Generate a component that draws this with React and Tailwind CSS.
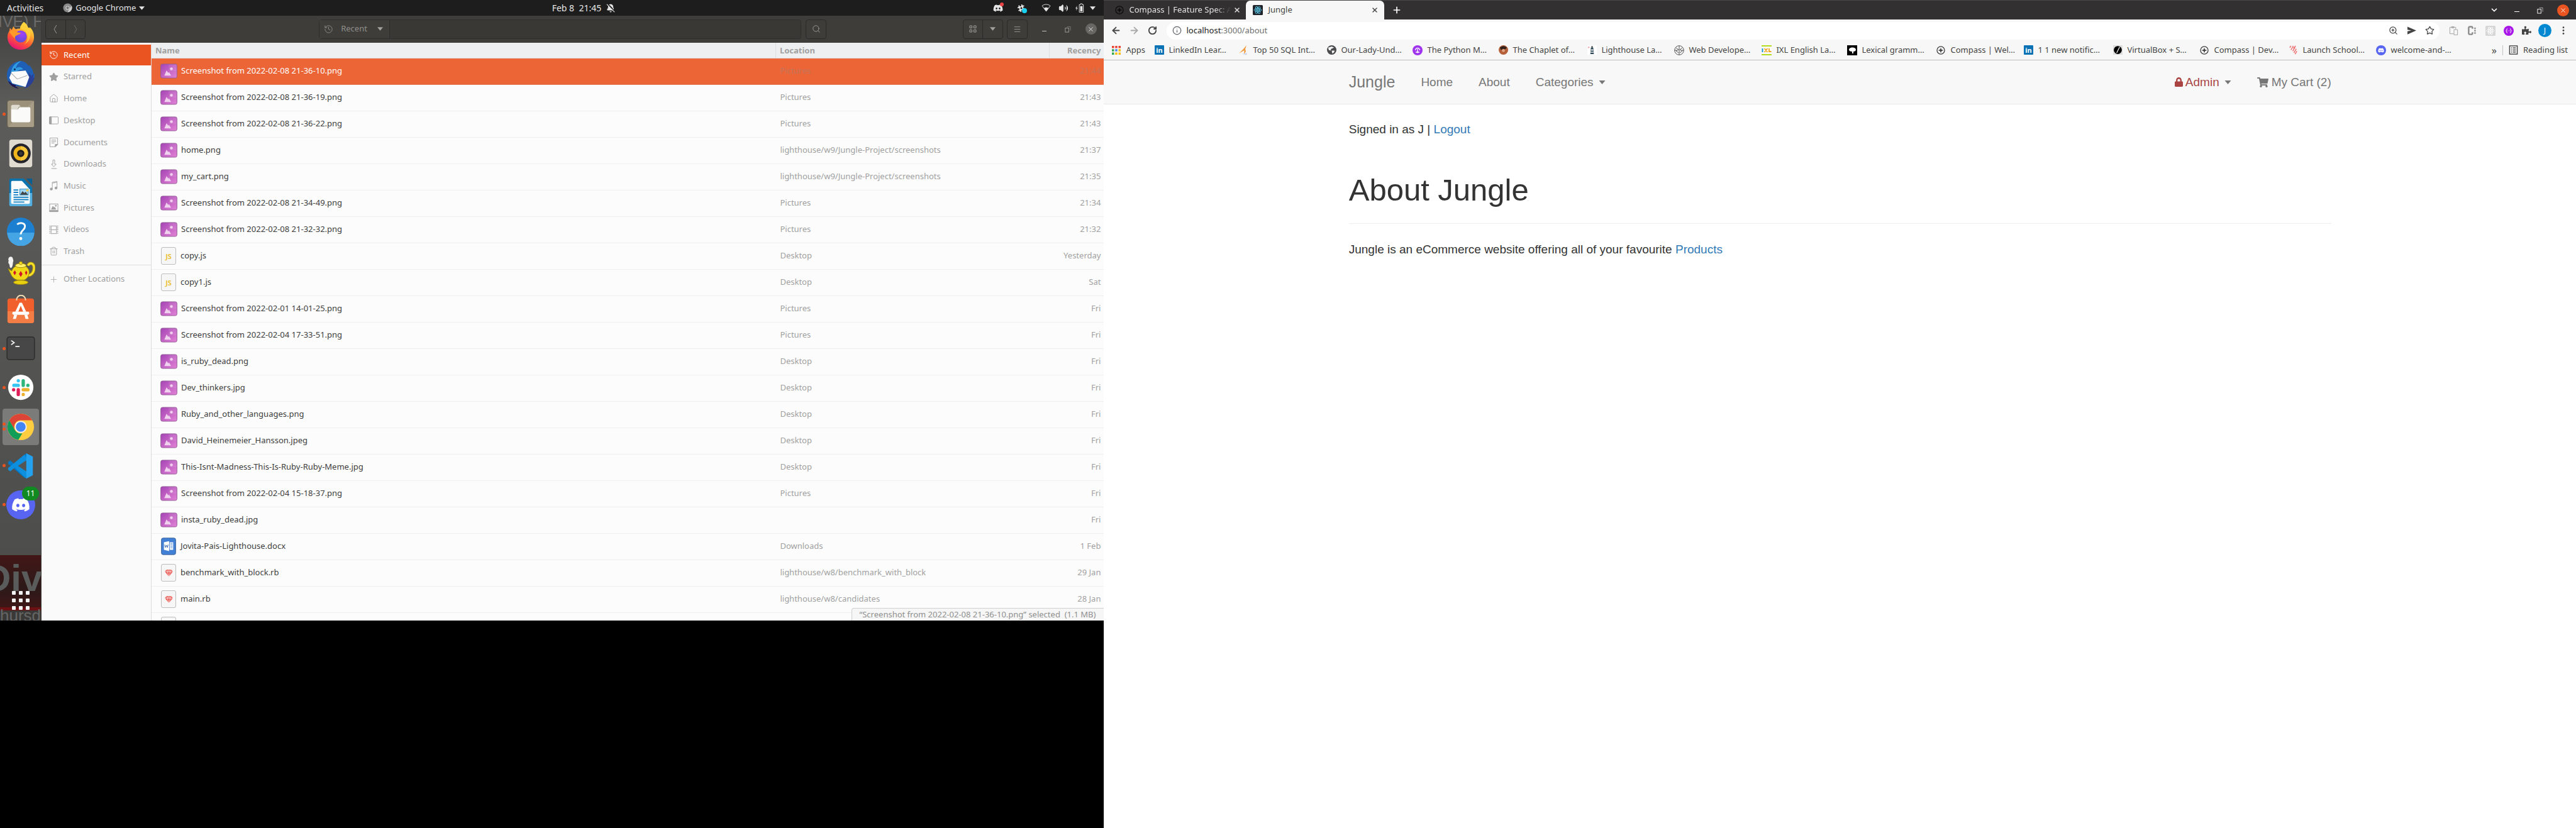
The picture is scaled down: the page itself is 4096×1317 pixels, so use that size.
import React from 'react';
import { FaLock, FaShoppingCart, FaDiscord, FaSlackHash, FaPuzzlePiece } from 'react-icons/fa';
import {
  ArrowLeft, ArrowRight, RotateCw, Info, X, Plus, Star, ZoomIn, Search, Menu, History, Trash2,
  Home, ChevronDown, Volume2, BellOff,
} from 'lucide-react';

/* ---------- shared small pieces ---------- */

function Caret({ className = 'w-[9px]' }) {
  return (
    <svg viewBox="0 0 10 6" className={'h-[6px] fill-current ' + className} aria-hidden="true">
      <path d="M0 0h10L5 6z" />
    </svg>
  );
}

function RestoreGlyph() {
  return (
    <svg viewBox="0 0 12 12" className="size-[11px]" fill="none" stroke="currentColor" aria-hidden="true">
      <rect x="2" y="4" width="6" height="7" />
      <path d="M5 1.5h6v7" opacity="0.6" />
    </svg>
  );
}

function AtomGlyph({ className, color, bg }) {
  return (
    <svg viewBox="0 0 16 16" className={className} aria-hidden="true">
      <rect width="16" height="16" rx="1.5" fill={bg} />
      <g fill="none" stroke={color} strokeWidth="0.9">
        <ellipse cx="8" cy="8" rx="6" ry="2.4" />
        <ellipse cx="8" cy="8" rx="6" ry="2.4" transform="rotate(60 8 8)" />
        <ellipse cx="8" cy="8" rx="6" ry="2.4" transform="rotate(120 8 8)" />
      </g>
      <circle cx="8" cy="8" r="1.3" fill={color} />
    </svg>
  );
}

/* ---------- dock ---------- */

function Firefox() {
  return (
    <svg viewBox="0 0 48 48" className="size-[46px]" aria-hidden="true">
      <defs>
        <linearGradient id="ff1" x1="0.8" y1="0" x2="0.3" y2="1">
          <stop offset="0" stopColor="#fff24a" />
          <stop offset="0.35" stopColor="#ffb030" />
          <stop offset="0.65" stopColor="#ff5a30" />
          <stop offset="1" stopColor="#e4107c" />
        </linearGradient>
        <radialGradient id="ff2" cx="0.6" cy="0.3" r="0.7">
          <stop offset="0" stopColor="#a340f5" />
          <stop offset="1" stopColor="#5a4fd8" />
        </radialGradient>
      </defs>
      <path fill="url(#ff1)" d="M29 1c3 2 6 5 7 9 1 0 1 1 2 1l1-1c5 4 7 10 7 16 0 12-10 21-22 21S2 38 2 26c0-4 1-7 3-10l1-5 3 3 3-6c1 2 2 4 4 5 2-1 5-1 7-1C23 8 26 4 29 1z" />
      <circle cx="24" cy="25" r="10" fill="url(#ff2)" />
      <path fill="#ff9a2a" d="M5 17c3-2 7-3 10-1 3 3 6 3 9 3-1 3-6 3-8 5-2 1-2 3-1 5-3-2-6-6-10-12z" />
      <path fill="#ffd23c" d="M29 1c3 2 6 5 7 9 4 4 5 10 3 17-1 5-5 9-9 11 6-5 7-14 2-21-2-3-7-4-9-5C23 8 26 4 29 1z" opacity="0.75" />
    </svg>
  );
}

function Thunderbird() {
  return (
    <svg viewBox="0 0 48 48" className="size-[46px]" aria-hidden="true">
      <path fill="#1f5fb5" d="M24 1C11 2 1 12 1 25c0 7 3 13 7 17l4-2 4 4 2-2c9 4 18 1 24-5 4-5 5-10 5-15l-2 1c0-6-3-11-7-15l-1 1C33 4 29 1 24 1z" />
      <path fill="#2f9be0" d="M8 22C8 11 15 3 25 1c-4 3-8 6-9 12 5-3 10-2 12 2-5 0-9 1-12 5l-5 5z" />
      <path fill="#2a3f96" d="M37 20c1 9 0 19-8 27 9-2 16-9 18-19l-3 2 2-8-4 4z" />
      <path fill="#fafafa" d="M9 19l23-2 6 11-6 16-22-6-5-9z" />
      <path fill="none" stroke="#aaa" strokeWidth="1.2" d="M8 21l10 10 17-6" />
      <path fill="#201650" d="M3 34l8 6 5 1-1 2 6 4C13 46 6 42 3 34z" />
      <circle cx="14" cy="15" r="1.6" fill="#133064" />
    </svg>
  );
}

function FilesApp() {
  return (
    <svg viewBox="0 0 48 48" className="size-[46px]" aria-hidden="true">
      <rect x="1.5" y="1.5" width="45" height="45" rx="4" fill="#9c927c" stroke="#5f594a" />
      <path d="M46 2L3 46h40a3 3 0 003-3z" fill="#a89e88" />
      <path d="M8 12a3 3 0 013-3h10l3 3h-3l-3 6H8z" fill="#dedad0" />
      <path d="M8 17h11l3-4h16a2 2 0 012 2v20a3 3 0 01-3 3H11a3 3 0 01-3-3z" fill="#fafaf8" />
    </svg>
  );
}

function Rhythmbox() {
  return (
    <svg viewBox="0 0 48 48" className="size-[46px]" aria-hidden="true">
      <rect x="5" y="1" width="38" height="46" rx="4" fill="#dfdbd0" />
      <circle cx="24" cy="24" r="16.5" fill="#23242c" />
      <circle cx="24" cy="24" r="12" fill="#f0b51c" />
      <path d="M24 12a12 12 0 010 24z" fill="#f7c83c" />
      <circle cx="24" cy="24" r="6" fill="#1b1b1b" />
      <circle cx="24" cy="24" r="3" fill="#3a3a3a" />
    </svg>
  );
}

function Writer() {
  return (
    <svg viewBox="0 0 48 48" className="size-[46px]" aria-hidden="true">
      <path d="M8 1h21l14 15v28a3 3 0 01-3 3H8a3 3 0 01-3-3V4a3 3 0 013-3z" fill="#0b73ae" />
      <path d="M5 25h38v19a3 3 0 01-3 3H8a3 3 0 01-3-3z" fill="#55afdf" />
      <path d="M33 1h10v11z" fill="#0a5f92" />
      <path d="M10 5h16l13 14v22a2 2 0 01-2 2H10a2 2 0 01-2-2V7a2 2 0 012-2z" fill="#fdfdfd" />
      <g fill="#1583c4">
        <path d="M12 19h8v2h-8zM12 23h8v2h-8zM12 27h8v2h-8zM12 31h25v2H12zM12 35h25v2H12zM12 39h18v2H12z" />
        <path d="M22 18h15v11H22z" />
      </g>
      <path d="M23 19h13v9H23z" fill="#9fd6f2" />
      <path d="M23 28l4-6 3 3 2-2 4 5z" fill="#444" />
      <circle cx="35" cy="20.5" r="2" fill="#f6c944" />
    </svg>
  );
}

function HelpApp() {
  return (
    <svg viewBox="0 0 48 48" className="size-[46px]" aria-hidden="true">
      <circle cx="24" cy="24" r="23" fill="#1d7fd0" />
      <path d="M1.5 26a22.5 22.5 0 0045 0z" fill="#45a5e4" />
      <path d="M18 12.500c3-3 13-4 13 3.500 0 6-7 6-7 13" fill="none" stroke="#fff" strokeWidth="3" />
      <circle cx="24" cy="36" r="2.5" fill="#fff" />
    </svg>
  );
}

function Teapot() {
  return (
    <svg viewBox="0 0 48 48" className="size-[46px]" aria-hidden="true">
      <path fill="#f2f2f2" d="M5 2c3-2 6 0 6 3 1 2 1 4 0 6 0 4-1 8-3 9-3 0-2-4-3-6-2-2-2-4-1-6-1-2-1-4 1-6z" />
      <path fill="none" stroke="#b99a08" strokeWidth="5" d="M36 16c3-6 10-4 10 4s-5 13-11 12" />
      <path fill="none" stroke="#f6e22c" strokeWidth="3" d="M36 16c3-6 10-4 10 4s-5 13-11 12" />
      <path fill="#eed818" stroke="#a38a08" d="M3 21l6 4c2-6 8-10 15-10s14 5 14 12c0 6-4 11-8 13H18c-6-2-9-6-11-11z" />
      <ellipse cx="24" cy="16" rx="9" ry="3.5" fill="#fff06a" stroke="#a38a08" />
      <circle cx="24" cy="12" r="2.6" fill="#f3de20" stroke="#a38a08" />
      <ellipse cx="24" cy="44" rx="12" ry="3.5" fill="#e7cf12" stroke="#a38a08" />
      <path fill="#d3122a" d="M14 24l2.500 4-2.500 4-2.500-4zM24 25l3 5-3 5-3-5zM33 24l2 4-2 4-2-4z" />
    </svg>
  );
}

function SoftwareApp() {
  return (
    <svg viewBox="0 0 48 48" className="size-[46px]" aria-hidden="true">
      <rect x="2" y="6" width="44" height="41" rx="4" fill="#f1602c" />
      <path d="M2 27h44v16a4 4 0 01-4 4H6a4 4 0 01-4-4z" fill="#f47c45" />
      <path d="M17 9c0-11 15-11 15 0" fill="none" stroke="#f3dcb5" strokeWidth="2" />
      <path d="M15 28l7-15h4l7 15h-5l-4-10-4 10z" fill="#fff" />
      <rect x="10" y="28" width="28" height="5" rx="2.5" fill="#fff" />
      <path d="M13 33h5l-2 7h-5zM30 33h5l2 7h-5z" fill="#fff" />
    </svg>
  );
}

function TerminalApp() {
  return (
    <svg viewBox="0 0 48 40" className="w-[46px] h-[38px]" aria-hidden="true">
      <rect x="1" y="1" width="46" height="38" rx="4" fill="#474747" stroke="#2c2c2c" strokeWidth="1.5" />
      <path d="M8 7l5 3.500L8 14M15 17h7" fill="none" stroke="#f3f3f3" strokeWidth="1.8" />
    </svg>
  );
}

function SlackApp() {
  return (
    <svg viewBox="0 0 48 48" className="size-[42px]" aria-hidden="true">
      <circle cx="24" cy="24" r="23" fill="#fff" />
      <g strokeWidth="6" strokeLinecap="round">
        <path d="M19.500 12v.1M11.500 20.500h8" stroke="#36c5f0" />
        <path d="M28.500 12v8.500M37 20.500h-.1" stroke="#2eb67d" />
        <path d="M28.500 37v-.1M28.500 28.500H37" stroke="#ecb22e" />
        <path d="M11 28.500h.1M19.500 28.500V37" stroke="#e01e5a" />
      </g>
    </svg>
  );
}

function ChromeApp() {
  return (
    <svg viewBox="0 0 48 48" className="size-[44px]" aria-hidden="true">
      <circle cx="24" cy="24" r="23" fill="#ffcd40" />
      <path d="M24 1a23 23 0 0119.900 11.500H24a11.500 11.500 0 00-10 17.200L4.100 12.500A23 23 0 0124 1z" fill="#db4437" />
      <path d="M4.100 12.500L14 29.700A11.500 11.500 0 0024 35.500l3-.4-7 11.500A23 23 0 014.100 12.500z" fill="#0f9d58" />
      <path d="M34 29.700L24 47l-4-.4L27 35z" fill="#ffcd40" />
      <circle cx="24" cy="24" r="10.500" fill="#f1f1f1" />
      <circle cx="24" cy="24" r="8.500" fill="#4285f4" />
    </svg>
  );
}

function CodeApp() {
  return (
    <svg viewBox="0 0 48 48" className="size-[42px]" aria-hidden="true">
      <path d="M34 1L13 21 5 14l-4 3v3l30 26 4-10V14z" fill="#0078c8" />
      <path d="M34 47L13 27l-8 7-4-3v-3L31 3l4 9z" fill="#0d8fdd" />
      <path d="M34 1l12 6v34l-12 6z" fill="#24a2f0" />
      <path d="M34 14L19 24l15 10z" fill="#555553" />
    </svg>
  );
}

function DiscordApp() {
  return (
    <span className="relative grid size-[46px] place-items-center rounded-full bg-[#5865f2] text-white">
      <FaDiscord className="size-[30px]" aria-hidden="true" />
      <span className="absolute -top-[6px] -right-[6px] grid h-[22px] w-[27px] place-items-center rounded-full bg-[#118a22] text-[12px] leading-none">11</span>
    </span>
  );
}

const DOCK = [
  { name: 'Firefox', Icon: Firefox, dots: 0 },
  { name: 'Thunderbird', Icon: Thunderbird, dots: 0 },
  { name: 'Files', Icon: FilesApp, dots: 1 },
  { name: 'Rhythmbox', Icon: Rhythmbox, dots: 0 },
  { name: 'Writer', Icon: Writer, dots: 0 },
  { name: 'Help', Icon: HelpApp, dots: 0 },
  { name: 'Teapot', Icon: Teapot, dots: 0 },
  { name: 'Software', Icon: SoftwareApp, dots: 0 },
  { name: 'Terminal', Icon: TerminalApp, dots: 1 },
  { name: 'Slack', Icon: SlackApp, dots: 1 },
  { name: 'Chrome', Icon: ChromeApp, dots: 2, active: true },
  { name: 'Code', Icon: CodeApp, dots: 1 },
  { name: 'Discord', Icon: DiscordApp, dots: 1 },
];

function Dock() {
  return (
    <nav aria-label="Dock" className="relative flex w-[66px] shrink-0 flex-col overflow-hidden border-r border-[#3c3b39] bg-linear-to-b from-[#414140] via-[#5c5c5a] via-15% to-[#4b4b4a]">
      {/* Wallpaper behind the dock */}
      <div aria-hidden="true" className="absolute inset-x-0 top-0 h-5 overflow-hidden font-['Liberation_Sans'] text-[25px] leading-none whitespace-nowrap text-[#6b6b6a]">
        <span className="absolute bottom-[-2px] left-[-3px]">IVE) H</span>
      </div>
      <div aria-hidden="true" className="absolute inset-x-0 bottom-0 h-[104px] overflow-hidden bg-linear-to-b from-[#431616] via-[#2c1919] to-[#4a1214] font-['Liberation_Sans'] font-bold whitespace-nowrap">
        <span className="absolute top-[5px] left-[-26px] text-[60px] leading-[64px] text-[#5a5c5b]">Div</span>
        <div className="absolute inset-x-0 bottom-0 h-[21px] border-t-[5px] border-[#6c1013] bg-[#3a3938]" />
        <span className="absolute bottom-[-5px] left-0 text-[26px] leading-none font-normal text-[#666]">hursday</span>
      </div>
      <ul className="relative flex h-[809px] flex-col pt-[1px]">
        {DOCK.map(({ name, Icon, dots, active }) => (
          <li key={name} className="flex min-h-0 flex-1 items-center pl-[4px]">
            <button
              type="button"
              aria-label={name}
              className={
                active
                  ? 'relative grid size-[58px] place-items-center rounded-[4px] bg-[#7b7b79]'
                  : 'relative grid size-[58px] place-items-center rounded-[4px]'
              }
            >
              <Icon />
              <span className="absolute left-0 flex flex-col gap-[3px]">
                {Array.from({ length: dots }, (_, i) => (
                  <span key={i} className="size-[5px] rounded-full bg-[#e95420]" />
                ))}
              </span>
            </button>
          </li>
        ))}
      </ul>
      <button type="button" aria-label="Show applications" className="relative mx-auto mt-auto mb-[17px] grid grid-cols-3 gap-x-[5px] gap-y-[6px]">
        {Array.from({ length: 9 }, (_, i) => (
          <span key={i} className="size-[6px] rounded-[1px] bg-[#f2f2f2]" />
        ))}
      </button>
    </nav>
  );
}

/* ---------- file manager ---------- */

const StarGlyph = ({ className }) => <Star className={className} fill="currentColor" />;
const DesktopGlyph = ({ className }) => (
  <svg viewBox="0 0 16 16" className={className} fill="none" stroke="currentColor" aria-hidden="true">
    <rect x="0.5" y="2" width="15" height="12" rx="1" />
    <path d="M1 2h3v12H1z" fill="currentColor" />
  </svg>
);
const DocumentGlyph = ({ className }) => (
  <svg viewBox="0 0 16 16" className={className} fill="none" stroke="currentColor" aria-hidden="true">
    <path d="M1.500 .5h13v11l-4 4h-9zM4 4h8M4 6.500h8M4 9h5" />
    <path d="M10.500 15.500v-4h4z" fill="currentColor" />
  </svg>
);
const DownloadGlyph = ({ className }) => (
  <svg viewBox="0 0 16 16" className={className} fill="none" stroke="currentColor" aria-hidden="true">
    <path d="M6.500 .5h3v7h2.500L8 12 4 7.500h2.500zM4 15h9" />
  </svg>
);
const MusicGlyph = ({ className }) => (
  <svg viewBox="0 0 16 16" className={className} fill="none" stroke="currentColor" aria-hidden="true">
    <path d="M5.500 13V2l8-1.500V11M5.500 3.500l8-1.500" />
    <circle cx="3.800" cy="13.500" r="1.900" fill="currentColor" />
    <circle cx="11.800" cy="11.800" r="1.900" fill="currentColor" />
  </svg>
);
const PictureGlyph = ({ className }) => (
  <svg viewBox="0 0 16 16" className={className} fill="none" stroke="currentColor" aria-hidden="true">
    <rect x="1" y="1.500" width="14" height="13" />
    <path d="M1 12.500h14v2H1zM4 10.500l2.500-5 2 2.500 1-1 2 3.500z" fill="currentColor" />
    <circle cx="11.500" cy="4.500" r="1" fill="currentColor" />
  </svg>
);
const FilmGlyph = ({ className }) => (
  <svg viewBox="0 0 16 16" className={className} fill="none" stroke="currentColor" aria-hidden="true">
    <path d="M3.500 1v14M12.500 1v14M3.500 1.500h9M3.500 8h9M3.500 14.500h9" />
    <path d="M1.500 1v14M14.500 1v14" strokeWidth="2" strokeDasharray="1.500 1.500" />
  </svg>
);

const PLACES = [
  ['Recent', History],
  ['Starred', StarGlyph],
  ['Home', Home],
  ['Desktop', DesktopGlyph],
  ['Documents', DocumentGlyph],
  ['Downloads', DownloadGlyph],
  ['Music', MusicGlyph],
  ['Pictures', PictureGlyph],
  ['Videos', FilmGlyph],
  ['Trash', Trash2],
];

const FILES = [
  ['img', 'Screenshot from 2022-02-08 21-36-10.png', 'Pictures', '21:44'],
  ['img', 'Screenshot from 2022-02-08 21-36-19.png', 'Pictures', '21:43'],
  ['img', 'Screenshot from 2022-02-08 21-36-22.png', 'Pictures', '21:43'],
  ['img', 'home.png', 'lighthouse/w9/Jungle-Project/screenshots', '21:37'],
  ['img', 'my_cart.png', 'lighthouse/w9/Jungle-Project/screenshots', '21:35'],
  ['img', 'Screenshot from 2022-02-08 21-34-49.png', 'Pictures', '21:34'],
  ['img', 'Screenshot from 2022-02-08 21-32-32.png', 'Pictures', '21:32'],
  ['js', 'copy.js', 'Desktop', 'Yesterday'],
  ['js', 'copy1.js', 'Desktop', 'Sat'],
  ['img', 'Screenshot from 2022-02-01 14-01-25.png', 'Pictures', 'Fri'],
  ['img', 'Screenshot from 2022-02-04 17-33-51.png', 'Pictures', 'Fri'],
  ['img', 'is_ruby_dead.png', 'Desktop', 'Fri'],
  ['img', 'Dev_thinkers.jpg', 'Desktop', 'Fri'],
  ['img', 'Ruby_and_other_languages.png', 'Desktop', 'Fri'],
  ['img', 'David_Heinemeier_Hansson.jpeg', 'Desktop', 'Fri'],
  ['img', 'This-Isnt-Madness-This-Is-Ruby-Ruby-Meme.jpg', 'Desktop', 'Fri'],
  ['img', 'Screenshot from 2022-02-04 15-18-37.png', 'Pictures', 'Fri'],
  ['img', 'insta_ruby_dead.jpg', '', 'Fri'],
  ['doc', 'Jovita-Pais-Lighthouse.docx', 'Downloads', '1 Feb'],
  ['rb', 'benchmark_with_block.rb', 'lighthouse/w8/benchmark_with_block', '29 Jan'],
  ['rb', 'main.rb', 'lighthouse/w8/candidates', '28 Jan'],
  ['rb', '', '', ''],
];

function FileIcon({ kind }) {
  if (kind === 'img') {
    return (
      <svg viewBox="0 0 30 26" className="w-[27px] h-[24px] shrink-0" aria-hidden="true">
        <defs>
          <linearGradient id="pic" x1="0" y1="0" x2="1" y2="1">
            <stop offset="0" stopColor="#a544b4" />
            <stop offset="1" stopColor="#e283d6" />
          </linearGradient>
        </defs>
        <rect x="0.7" y="0.7" width="28.6" height="24.6" rx="3" fill="url(#pic)" stroke="#8e5b93" />
        <path d="M15 1h11a3 3 0 013 3v9H15z" fill="#fff" opacity="0.08" />
        <path d="M7 21l4-9 3 4.500 1-2 4 6.500z" fill="#f0d2ee" />
        <circle cx="19.500" cy="9" r="2.500" fill="#f0d2ee" />
      </svg>
    );
  }
  if (kind === 'doc') {
    return (
      <svg viewBox="0 0 26 30" className="w-[24px] h-[28px] mx-[1px] shrink-0" aria-hidden="true">
        <rect x="0.7" y="0.7" width="24.6" height="28.6" rx="3" fill="#4280d6" stroke="#3a6296" />
        <path d="M5 8l9-2v17l-9-2z" fill="#fff" />
        <path d="M15 8h6v13h-6z" fill="#fff" />
        <path d="M16 10h4M16 12.500h4M16 15h4M16 17.500h4" stroke="#4280d6" strokeWidth="0.9" />
        <path d="M6.500 12l1.200 5 1.800-4 1.600 4 1.200-5" fill="none" stroke="#2f62ae" />
      </svg>
    );
  }
  return (
    <span className="mx-[1px] grid h-[28px] w-[24px] shrink-0 place-items-center rounded-[3px] border border-[#bdbdbd] bg-[#f6f6f6]">
      {kind === 'js' ? (
        <span className="text-[11px] leading-none font-bold text-[#ecc23c]">JS</span>
      ) : (
        <svg viewBox="0 0 14 12" className="w-[13px] h-[11px]" aria-hidden="true">
          <path d="M3 0h8l3 3.500L7 12 0 3.500z" fill="#ee5f59" />
          <path d="M0 3.800h14M4.500 4l2.500 8 2.500-8M3 0l2 3.800L7 .5l2 3.300L11 0" fill="none" stroke="#f6f6f6" strokeWidth="0.7" />
        </svg>
      )}
    </span>
  );
}

const headBtn = 'grid h-[31px] place-items-center text-[#a3a29e]';

function FileManager() {
  return (
    <section aria-label="Files" className="relative flex min-w-0 flex-1 flex-col overflow-hidden bg-[#fafafa]">
      <header className="grid h-[43px] shrink-0 grid-cols-[1fr_auto_1fr] items-center bg-[#3e3d3a] pb-[1px] text-[#8f8e8a]">
        <div className="ml-[6px] flex w-[64px] divide-x divide-[#2a2a28] rounded-[4px] border border-[#2a2a28]">
          <button type="button" aria-label="Back" className="grid h-[29px] flex-1 place-items-center">
            <svg viewBox="0 0 8 16" className="h-[15px] w-[8px]" fill="none" stroke="#a3a29e"><path d="M6 1L2 8l4 7" /></svg>
          </button>
          <button type="button" aria-label="Forward" className="grid h-[29px] flex-1 place-items-center">
            <svg viewBox="0 0 8 16" className="h-[15px] w-[8px]" fill="none" stroke="#6d6c69"><path d="M2 1l4 7-4 7" /></svg>
          </button>
        </div>
        <div className="flex w-[807px] gap-[7px]">
          <div className="flex h-[31px] flex-1 rounded-[4px] border border-[#302f2d] bg-[#393835]">
            <button type="button" className="flex w-[112px] items-center gap-3 border-r border-[#302f2d] bg-[#3e3d3a] pl-[7px] text-[13px]">
              <History className="size-[15px]" strokeWidth={1.5} aria-hidden="true" />
              Recent
              <Caret className="ml-[4px] w-[9px] text-[#a3a29e]" />
            </button>
          </div>
          <button type="button" aria-label="Search" className={headBtn + ' w-[33px] rounded-[4px] border border-[#2a2a28]'}>
            <Search className="size-[14px]" strokeWidth={1.5} />
          </button>
        </div>
        <div className="flex items-center justify-end pr-[2px]">
          <div className="mr-[6px] flex divide-x divide-[#2a2a28] rounded-[4px] border border-[#2a2a28]">
            <button type="button" aria-label="Grid view" className="grid h-[29px] w-[31px] place-items-center text-[#a3a29e]">
              <svg viewBox="0 0 12 12" className="size-[12px]" fill="none" stroke="currentColor">
                <path d="M1 1h3.500v3.500H1zM7.500 1H11v3.500H7.500zM1 7.500h3.500V11H1zM7.500 7.500H11V11H7.500z" />
              </svg>
            </button>
            <button type="button" aria-label="View options" className="grid h-[29px] w-[31px] place-items-center text-[#a3a29e]">
              <Caret />
            </button>
          </div>
          <button type="button" aria-label="Menu" className={headBtn + ' mr-[8px] w-[33px] rounded-[4px] border border-[#2a2a28]'}>
            <Menu className="size-[13px]" strokeWidth={1.5} />
          </button>
          <button type="button" aria-label="Minimize" className={headBtn + ' w-[37px]'}>
            <span className="mt-[6px] h-[1px] w-[7px] bg-[#c2c1bd]" />
          </button>
          <button type="button" aria-label="Restore" className={headBtn + ' w-[37px]'}>
            <RestoreGlyph />
          </button>
          <button type="button" aria-label="Close" className={headBtn + ' w-[37px]'}>
            <span className="grid size-[18px] place-items-center rounded-full bg-[#686764] text-[#f0f0f0]">
              <X className="size-[11px]" />
            </span>
          </button>
        </div>
      </header>

      <div className="flex min-h-0 flex-1">
        <aside className="flex w-[175px] shrink-0 flex-col border-r border-[#dcdcdc] text-[13px] text-[#a0a0a0]">
          <ul className="flex h-[350px] flex-col pt-[3px]">
            {PLACES.map(([label, Icon], i) => (
              <li key={label} className="flex flex-1 flex-col">
                <button
                  type="button"
                  className={
                    i === 0
                      ? 'flex h-[33px] w-full items-center gap-2 bg-[#e95420] pl-3 text-white'
                      : 'flex h-[33px] w-full items-center gap-2 pl-3'
                  }
                >
                  <Icon className="size-[15px]" strokeWidth={1.5} />
                  {label}
                </button>
              </li>
            ))}
          </ul>
          <div className="mt-[3px] border-t border-[#dcdcdc] pt-[5px]">
            <button type="button" className="flex h-[34px] w-full items-center gap-2 pl-3">
              <Plus className="size-[15px]" strokeWidth={1.2} />
              Other Locations
            </button>
          </div>
        </aside>

        <div className="min-w-0 flex-1 overflow-hidden bg-[#fcfcfc]">
          <table className="w-full table-fixed text-left text-[13px]">
            <colgroup>
              <col />
              <col className="w-[435px]" />
              <col className="w-[87px]" />
            </colgroup>
            <thead>
              <tr className="h-[24px] border-b border-[#dfe0e1] bg-[#eeeff0] text-[#a0a0a0]">
                <th className="pl-[6px] leading-[20px] font-bold">Name</th>
                <th className="border-l border-[#dddedf] pl-[6px] leading-[20px] font-bold">Location</th>
                <th className="border-l border-[#dddedf] pr-[5px] text-right leading-[20px] font-bold">Recency</th>
              </tr>
            </thead>
            <tbody>
              {FILES.map(([kind, name, where, when], i) => (
                <tr
                  key={i}
                  className={
                    i === 0
                      ? 'h-[42px] border-b border-[#e27a56] bg-[#eb6536] text-white'
                      : 'h-[42px] border-b border-[#efefef] text-[#3d3d3d]'
                  }
                >
                  <td className="pl-[14px]">
                    <span className="flex items-center gap-[6px]">
                      <FileIcon kind={kind} />
                      {name}
                    </span>
                  </td>
                  <td className={i === 0 ? 'pl-[7px] text-[#c4745a]' : 'pl-[7px] text-[#a0a0a0]'}>{where}</td>
                  <td className={i === 0 ? 'pr-[5px] text-right text-[#c4745a]' : 'pr-[5px] text-right text-[#a0a0a0]'}>{when}</td>
                </tr>
              ))}
            </tbody>
          </table>
        </div>
      </div>

      <p className="absolute right-0 bottom-0 flex h-[20px] items-center rounded-tl-[4px] border-t border-l border-[#d0d0d0] bg-[#f6f6f6] pr-[13px] pl-[12px] text-[13px] whitespace-pre text-[#8f8f8f]">
        “Screenshot from 2022-02-08 21-36-10.png” selected  (1.1 MB)
      </p>
    </section>
  );
}

function TopBar() {
  return (
    <header className="flex h-[25px] shrink-0 items-center bg-[#1d1d1d] text-[14px] text-[#e6e6e6]">
      <div className="flex w-1/2 items-center">
        <button type="button" className="ml-[11px]">Activities</button>
        <button type="button" className="ml-[31px] flex items-center gap-[5px] text-[13px]">
          <svg viewBox="0 0 16 16" className="size-[15px]" aria-hidden="true">
            <circle cx="8" cy="8" r="7.500" fill="#8b8b8b" />
            <path d="M8 .5a7.500 7.500 0 016.500 4L11 10l-3 5.500A7.500 7.500 0 0015.500 8 7.500 7.500 0 008 .5z" fill="#cfcfcf" />
            <circle cx="8" cy="8" r="3.300" fill="#e6e6e6" />
            <circle cx="8" cy="8" r="2.400" fill="#777" />
          </svg>
          Google Chrome
          <Caret />
        </button>
      </div>
      <div className="flex flex-1 items-center">
        <time className="flex items-center gap-[8px] whitespace-pre">
          Feb 8  21:45
          <BellOff className="size-[14px]" fill="currentColor" aria-hidden="true" />
        </time>
        <div className="ml-auto flex items-center pr-[11px]">
          <span className="grid w-[37px] place-items-center">
            <span className="relative">
              <FaDiscord className="size-[16px]" />
              <span className="absolute -top-[1px] -right-[1px] size-[6px] rounded-full bg-[#ed4245]" />
            </span>
          </span>
          <span className="mr-[8px] grid w-[37px] place-items-center">
            <span className="relative">
              <FaSlackHash className="size-[14px]" />
              <span className="absolute -right-[2px] -bottom-[1px] size-[8px] rounded-full bg-[#1ad0f0]" />
            </span>
          </span>
          <span className="grid w-[27px] place-items-center">
            <svg viewBox="0 0 16 14" className="w-[15px] h-[13px]" aria-hidden="true">
              <path d="M1 3.500C5 .3 11 .3 15 3.500L8 13z" fill="none" stroke="#e6e6e6" />
              <path d="M4 7.500c2.500-1.800 5.500-1.800 8 0L8 13z" fill="#e6e6e6" />
            </svg>
          </span>
          <span className="grid w-[27px] place-items-center">
            <Volume2 className="size-[16px]" fill="currentColor" strokeWidth={1.5} />
          </span>
          <span className="grid w-[27px] place-items-center">
            <svg viewBox="0 0 16 16" className="size-[15px]" aria-hidden="true">
              <path d="M3 4L0 9h2l-1 4 3-5H2z" fill="#e6e6e6" />
              <path d="M6.500 2.500h2V1h3v1.500h2v13h-7z" fill="none" stroke="#e6e6e6" />
              <path d="M8 5h4v9H8z" fill="#e6e6e6" />
            </svg>
          </span>
          <Caret className="mx-[2px] w-[9px]" />
        </div>
      </div>
    </header>
  );
}

/* ---------- browser ---------- */

const Linked = () => (
  <span className="grid size-[15px] place-items-center rounded-[1px] bg-[#0a72b5] text-[11px] leading-none font-bold text-white">in</span>
);
const AppsGlyph = () => (
  <svg viewBox="0 0 14 14" className="size-[14px]" aria-hidden="true">
    <path fill="#ea4335" d="M0 0h3.500v3.500H0zM5.200 0h3.500v3.500H5.200zM10.500 0H14v3.500h-3.500z" />
    <path fill="#34a853" d="M0 5.200h3.500v3.500H0zM0 10.500h3.500V14H0z" />
    <path fill="#4285f4" d="M5.200 5.200h3.500v3.500H5.200z" />
    <path fill="#fbbc04" d="M10.500 5.200H14v3.500h-3.500zM5.200 10.500h3.500V14H5.200zM10.500 10.500H14V14h-3.500z" />
  </svg>
);
const Heron = () => (
  <svg viewBox="0 0 16 16" className="size-[16px]" aria-hidden="true">
    <path d="M13 0l-2 6 1 4-3 4 .5-6L1 13l7-7z" fill="#ef9a3c" />
    <path d="M6 13.500l8-1-1 3z" fill="#ccd3e6" />
  </svg>
);
const Globe = () => (
  <svg viewBox="0 0 16 16" className="size-[15px]" aria-hidden="true">
    <circle cx="8" cy="8" r="8" fill="#4a4b4d" />
    <path d="M2 4l6-2 4 2-5 2-1 3-3-1zM8 9h5l-1 3-3 2z" fill="#f7f7f7" />
  </svg>
);
const Pod = () => (
  <svg viewBox="0 0 16 16" className="size-[16px]" aria-hidden="true">
    <circle cx="8" cy="8" r="8" fill="#a033ee" />
    <path d="M4.500 8a3.500 3.500 0 017 0M5 11h6M8 6v6.500" fill="none" stroke="#fff" strokeWidth="1.3" />
  </svg>
);
const Rosary = () => (
  <svg viewBox="0 0 16 16" className="size-[15px]" aria-hidden="true">
    <circle cx="8" cy="8" r="8" fill="#b5603a" />
    <path d="M2 4a8 8 0 0112 0l-3 3-3-1-4 2z" fill="#33211b" />
    <circle cx="8" cy="9" r="2.500" fill="#dca385" />
  </svg>
);
const Beacon = () => (
  <svg viewBox="0 0 16 16" className="size-[15px]" aria-hidden="true">
    <rect width="16" height="16" fill="#fff" />
    <path d="M6 4h4l1 11H5z" fill="#2e4a5a" />
    <path d="M6 7h4v2H6zM5.500 11h5v1.500h-5z" fill="#eee" />
    <path d="M7 1.500h2V4H7z" fill="#222" />
    <path d="M1 2l4 1.500L1 5z" fill="#f1a3a3" />
  </svg>
);
const Brain = () => (
  <svg viewBox="0 0 16 16" className="size-[16px]" fill="none" stroke="#444" strokeWidth="0.9" aria-hidden="true">
    <circle cx="8" cy="8" r="7.300" />
    <path d="M8 1v14M3 4l4 3-4 2 4 3M13 4L9 7l4 2-4 3M1 8h3M12 8h3" />
  </svg>
);
const Ixl = () => (
  <svg viewBox="0 0 16 16" className="size-[16px]" aria-hidden="true">
    <rect width="16" height="16" fill="#fff" />
    <path d="M0 0h16v2H0zM0 14h16v2H0z" fill="#b3dd1c" />
    <path d="M1.500 5v6" stroke="#1795d4" strokeWidth="2" />
    <path d="M4.500 5l5 6m0-6l-5 6M12 5v5h3.500" fill="none" stroke="#f3a21b" strokeWidth="1.8" />
  </svg>
);
const Elephant = () => (
  <svg viewBox="0 0 16 16" className="size-[16px]" aria-hidden="true">
    <rect width="16" height="16" fill="#000" />
    <path d="M3 7c0-4 10-5 11 0 0 2-2 3-4 3v3H8v-3c-3 0-5-1-5-3z" fill="#fff" />
  </svg>
);
const CompassIcon = ({ className = 'size-[14px]' }) => (
  <svg viewBox="0 0 16 16" className={className} aria-hidden="true">
    <circle cx="8" cy="8" r="6.900" fill="none" stroke="currentColor" strokeWidth="1.5" />
    <path d="M8 3l1.300 3.700L13 8 9.300 9.300 8 13 6.700 9.300 3 8l3.700-1.300z" fill="currentColor" />
  </svg>
);
const Slash = () => (
  <svg viewBox="0 0 16 16" className="size-[15px]" aria-hidden="true">
    <rect width="16" height="16" fill="#dedede" />
    <circle cx="8" cy="8" r="6.800" fill="#000" />
    <path d="M11 3L6 13" stroke="#fff" strokeWidth="1.3" />
  </svg>
);
const Launch = () => (
  <svg viewBox="0 0 16 16" className="size-[15px]" aria-hidden="true">
    <path d="M2 4l2-3M4 8l4-7M7 10l4-7M9 13l4-7M11 15l3-5M8 5l4-4" stroke="#ee6a6c" strokeWidth="1.5" />
  </svg>
);
const DiscordMark = () => (
  <span className="grid size-[16px] place-items-center rounded-full bg-[#5865f2] text-white">
    <FaDiscord className="size-[10px]" />
  </span>
);

const BOOKMARKS = [
  ['Apps', AppsGlyph, 'w-[68px]'],
  ['LinkedIn Lear…', Linked, 'w-[134px]'],
  ['Top 50 SQL Int…', Heron, 'w-[140px]'],
  ['Our-Lady-Und…', Globe, 'w-[137px]'],
  ['The Python M…', Pod, 'w-[136px]'],
  ['The Chaplet of…', Rosary, 'w-[141px]'],
  ['Lighthouse La…', Beacon, 'w-[139px]'],
  ['Web Develope…', Brain, 'w-[139px]'],
  ['IXL English La…', Ixl, 'w-[136px]'],
  ['Lexical gramm…', Elephant, 'w-[141px]'],
  ['Compass | Wel…', CompassIcon, 'w-[139px]'],
  ['1 1 new notific…', Linked, 'w-[142px]'],
  ['VirtualBox + S…', Slash, 'w-[138px]'],
  ['Compass | Dev…', CompassIcon, 'w-[141px]'],
  ['Launch School…', Launch, 'w-[140px]'],
  ['welcome-and-…', DiscordMark, 'w-[140px]'],
];

function TabStrip() {
  return (
    <div className="flex h-[31px] shrink-0 items-stretch border-t border-[#474747] bg-[#323031] text-[13px]">
      <div className="flex w-[226px] items-center pl-[18px] text-[#e3e3e3]">
        <CompassIcon className="size-[14px] shrink-0 text-[#0d0d0d]" />
        <span className="ml-[8px] w-[162px] overflow-hidden mask-r-from-85% whitespace-nowrap">Compass | Feature Spec: A</span>
        <button type="button" aria-label="Close Compass tab" className="ml-[4px]"><X className="size-[12px]" strokeWidth={3} /></button>
      </div>
      <div className="flex w-[220px] items-center rounded-t-[7px] bg-[#f7f7f7] pr-[9px] pl-[11px] text-[#444]">
        <AtomGlyph className="size-[16px]" color="#5ed3f3" bg="#20232a" />
        <span className="ml-[8px]">Jungle</span>
        <button type="button" aria-label="Close Jungle tab" className="ml-auto"><X className="size-[12px]" strokeWidth={3} /></button>
      </div>
      <button type="button" aria-label="New tab" className="ml-[12px] text-white"><Plus className="size-[16px]" strokeWidth={2.5} /></button>
      <div className="ml-auto flex items-center pr-[2px] text-white">
        <button type="button" aria-label="Search tabs" className="grid w-[36px] place-items-center"><ChevronDown className="size-[14px]" strokeWidth={3} /></button>
        <button type="button" aria-label="Minimize" className="grid w-[36px] place-items-center"><span className="mt-[5px] h-[1px] w-[8px] bg-white" /></button>
        <button type="button" aria-label="Restore" className="grid w-[37px] place-items-center"><RestoreGlyph /></button>
        <button type="button" aria-label="Close" className="grid w-[37px] place-items-center">
          <span className="grid size-[19px] place-items-center rounded-full bg-[#e95420]"><X className="size-[11px]" /></span>
        </button>
      </div>
    </div>
  );
}

function Toolbar() {
  return (
    <div className="flex h-[35px] shrink-0 items-center bg-[#f7f7f7] pr-[6px] pl-[5px] text-[#444]">
      <button type="button" aria-label="Back" className="grid w-[29px] place-items-center"><ArrowLeft className="size-[17px]" strokeWidth={2.5} /></button>
      <button type="button" aria-label="Forward" className="grid w-[29px] place-items-center text-[#a9a9a9]"><ArrowRight className="size-[17px]" strokeWidth={2.5} /></button>
      <button type="button" aria-label="Reload" className="grid w-[29px] place-items-center"><RotateCw className="size-[15px]" strokeWidth={3} /></button>
      <div className="ml-[8px] flex h-[28px] flex-1 items-center rounded-full bg-white pr-[1px] pl-[9px] text-[13px]">
        <Info className="size-[15px] text-[#5f6368]" strokeWidth={2} aria-hidden="true" />
        <label htmlFor="address" className="ml-[7px] text-[#202124]">localhost</label>
        <input id="address" defaultValue=":3000/about" className="min-w-0 flex-1 bg-transparent text-[#6f6f6f] outline-none" />
        <button type="button" aria-label="Zoom" className="grid w-[29px] place-items-center"><ZoomIn className="size-[15px]" strokeWidth={2} /></button>
        <button type="button" aria-label="Send" className="grid w-[29px] place-items-center">
          <svg viewBox="0 0 16 14" className="w-[14px] h-[13px] fill-current"><path d="M0 0l16 7-16 7V8.500L7 7 0 5.500z" /></svg>
        </button>
        <button type="button" aria-label="Bookmark" className="grid w-[29px] place-items-center"><Star className="size-[15px]" strokeWidth={2} /></button>
      </div>
      <div className="ml-[8px] flex items-center">
        <button type="button" aria-label="Clipboard" className="grid w-[29px] place-items-center text-[#a0a0a0]">
          <svg viewBox="0 0 16 16" className="size-[15px]" fill="none" stroke="currentColor"><path d="M8 13.500H1.500V2.500h10V6M4.500 3.500v-2h4v2zM8.500 6.500h6v9h-6z" /></svg>
        </button>
        <button type="button" aria-label="Color tools" className="grid w-[29px] place-items-center text-[#8d8d8d]">
          <svg viewBox="0 0 16 16" className="size-[15px]"><path d="M9 5V3.500a2 2 0 00-2-2H4.500a2 2 0 00-2 2v9a2 2 0 002 2H7a2 2 0 002-2V11" fill="none" stroke="currentColor" strokeWidth="2.6" /><path d="M12 3h2.500v2.500H12zM12 7h2.500v2.500H12zM12 11h2.500v2.500H12z" fill="currentColor" /></svg>
        </button>
        <button type="button" aria-label="React tools" className="grid w-[29px] place-items-center"><AtomGlyph className="size-[16px]" color="#fff" bg="#d6d6d6" /></button>
        <button type="button" aria-label="JSON viewer" className="grid w-[29px] place-items-center">
          <svg viewBox="0 0 16 16" className="size-[16px]"><circle cx="8" cy="8" r="8" fill="#a815e8" /><path d="M6 4.500C4 4.500 5.500 8 3.500 8c2 0 .5 3.500 2.500 3.500M10 4.500c2 0 .5 3.500 2.500 3.500-2 0-.5 3.500-2.500 3.500M6.300 8h1M8.800 8h1" fill="none" stroke="#fff" /></svg>
        </button>
        <button type="button" aria-label="Extensions" className="grid w-[29px] place-items-center"><FaPuzzlePiece className="size-[15px]" /></button>
        <button type="button" aria-label="Profile" className="grid w-[29px] place-items-center">
          <span className="grid size-[21px] place-items-center rounded-full bg-[#0288d1] text-[12px] text-white">J</span>
        </button>
        <button type="button" aria-label="More" className="grid w-[29px] place-items-center">
          <svg viewBox="0 0 4 16" className="h-[13px] w-[4px] fill-current"><circle cx="2" cy="2" r="1.700" /><circle cx="2" cy="8" r="1.700" /><circle cx="2" cy="14" r="1.700" /></svg>
        </button>
      </div>
    </div>
  );
}

function BookmarkBar() {
  return (
    <nav aria-label="Bookmarks" className="flex h-[30px] shrink-0 items-center border-b border-[#bcbcbc] bg-[#f7f7f7] pb-[2px] pl-[12px] text-[13px] text-[#444]">
      {BOOKMARKS.map(([label, Icon, width]) => (
        <a key={label} href="#bookmark" className={'flex shrink-0 items-center gap-[7px] whitespace-nowrap ' + width}>
          <span className="grid w-[16px] shrink-0 place-items-center"><Icon /></span>
          {label}
        </a>
      ))}
      <div className="ml-auto flex items-center pr-[13px] whitespace-nowrap">
        <button type="button" aria-label="More bookmarks" className="text-[16px] leading-none">»</button>
        <span className="mx-[9px] h-[16px] w-[1px] bg-[#c4c4c4]" />
        <button type="button" className="flex items-center gap-[8px]">
          <svg viewBox="0 0 16 16" className="size-[15px]" fill="none" stroke="currentColor" strokeWidth="1.5" aria-hidden="true">
            <rect x="1.500" y="1" width="13" height="14" />
            <path d="M4 4.500h1.500M7 4.500h5M4 8h1.500M7 8h5M4 11.500h1.500M7 11.500h5" />
          </svg>
          Reading list
        </button>
      </div>
    </nav>
  );
}

function WebPage() {
  return (
    <div className="flex-1 bg-white font-['Liberation_Sans',sans-serif] text-[19px] leading-[27px] text-[#333]">
      <nav aria-label="Site" className="h-[70px] border-b border-[#e7e7e7] bg-[#f8f8f8] text-[#777]">
        <div className="mx-auto flex h-full max-w-[1562px] items-center gap-[41px]">
          <a href="#jungle" className="text-[25px]">Jungle</a>
          <a href="#home">Home</a>
          <a href="#about">About</a>
          <a href="#categories" className="flex items-center gap-[8px]">Categories <Caret className="w-[11px]" /></a>
          <a href="#admin" className="ml-auto flex items-center gap-[4px] text-[#a94442]">
            <FaLock className="h-[17px] w-[13px]" />
            Admin <Caret className="ml-[4px] w-[11px] text-[#777]" />
          </a>
          <a href="#cart" className="flex items-center gap-[5px]"><FaShoppingCart className="size-[18px]" />My Cart (2)</a>
        </div>
      </nav>
      <main className="mx-auto max-w-[1562px] pt-[26px]">
        <p>Signed in as J | <a href="#logout" className="text-[#337ab7]">Logout</a></p>
        <h1 className="mt-[56px] border-b border-[#eee] pb-[26px] text-[49px] leading-[54px]">About Jungle</h1>
        <p className="mt-[27px]">Jungle is an eCommerce website offering all of your favourite <a href="#products" className="text-[#337ab7]">Products</a></p>
      </main>
    </div>
  );
}

export default function App() {
  return (
    <div className="flex min-h-screen items-stretch bg-black font-['Noto_Sans',sans-serif]">
      <div className="w-3/7 shrink-0">
        <div className="flex aspect-video w-full flex-col overflow-hidden">
          <TopBar />
          <div className="flex min-h-0 flex-1">
            <Dock />
            <FileManager />
          </div>
        </div>
      </div>
      <section aria-label="Browser" className="flex min-w-0 flex-1 flex-col">
        <TabStrip />
        <Toolbar />
        <BookmarkBar />
        <WebPage />
      </section>
    </div>
  );
}
